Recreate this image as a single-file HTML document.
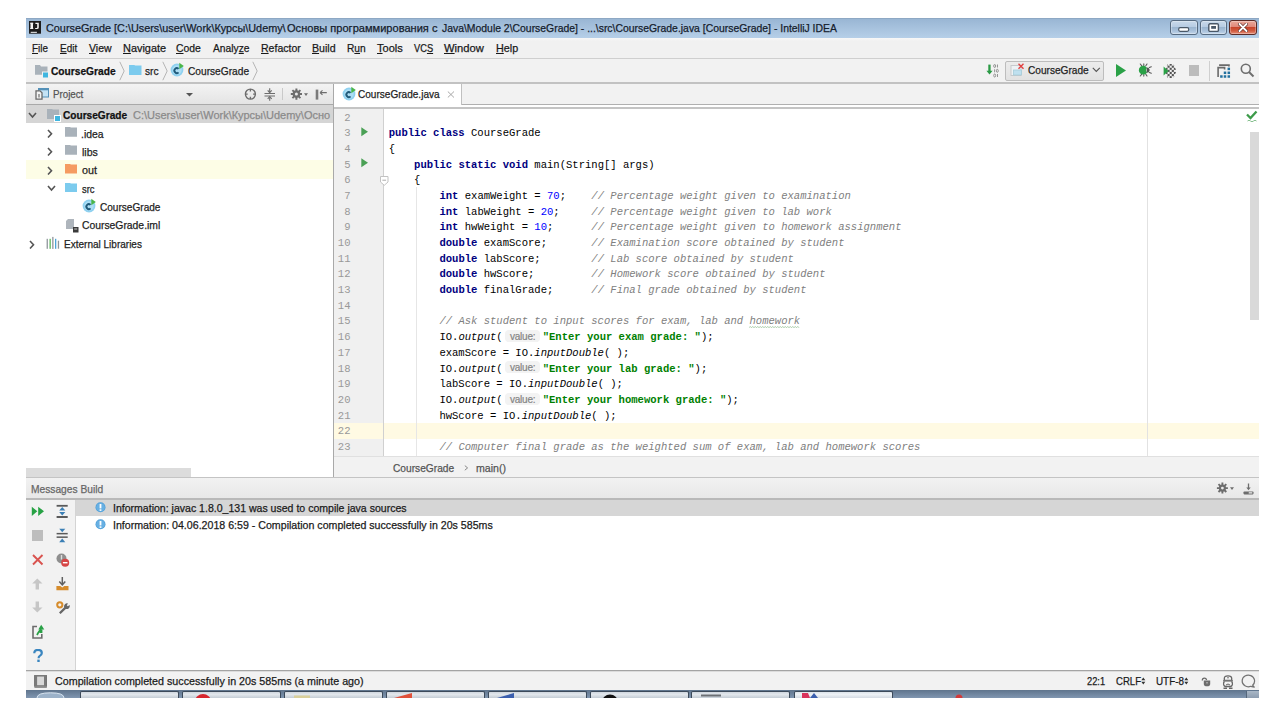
<!DOCTYPE html>
<html><head><meta charset="utf-8">
<style>
*{box-sizing:border-box}
html,body{margin:0;padding:0;width:1280px;height:720px;overflow:hidden;background:#fff;font-family:"Liberation Sans",sans-serif;}
.a{position:absolute}
.ui{font-family:"Liberation Sans",sans-serif;white-space:pre;color:#1a1a1a}
#title{left:26px;top:18px;width:1233px;height:20px;background:linear-gradient(#99b6d4,#b6cfe8);border-top:1px solid #8ea8c4}
#menu{left:26px;top:38px;width:1233px;height:21px;background:linear-gradient(#f8f8f8,#f1f1f1 15%);border-bottom:1px solid #cfcfcf}
#nav{left:26px;top:59px;width:1233px;height:25px;background:#f2f2f2;border-bottom:2px solid #c2c2c2}
#phead{left:26px;top:84px;width:307px;height:21px;background:linear-gradient(#f3f3f3,#e4e4e4);border-bottom:1px solid #a9a9a9}
#tree{left:26px;top:105px;width:307px;height:372px;background:#fff}
#tabs{left:333px;top:84px;width:926px;height:24px;background:#fff}
#tabbar{left:461px;top:84px;width:798px;height:21px;background:#f2f2f2;border-bottom:1px solid #b0b0b0}
#tab{left:333px;top:84px;width:129px;height:21px;background:#fff;border-right:1px solid #c0c0c0}
#tabline{left:333px;top:107px;width:926px;height:2px;background:#c4c4c4;z-index:2}
#editor{left:333px;top:108px;width:926px;height:348px;background:#fff;overflow:hidden}
#gutter{left:0;top:0;width:51px;height:348px;background:#f0f0f0;border-right:1px solid #dcdcdc}
#ecrumb{left:333px;top:456px;width:926px;height:21px;background:#f2f2f2;border-top:1px solid #e0e0e0}
#mhead{left:26px;top:477px;width:1233px;height:23px;background:linear-gradient(#f2f2f2,#e8e8e8);border-top:1px solid #c4c4c4;border-bottom:2px solid #b9b9b9}
#msg{left:26px;top:500px;width:1233px;height:170px;background:#fff}
#mtool{left:26px;top:500px;width:50px;height:170px;background:#f2f2f2;border-right:1px solid #d4d4d4}
#status{left:26px;top:670px;width:1233px;height:20px;background:#f2f2f2;border-top:1px solid #a4a4a4;box-shadow:inset 0 1px 0 #dcdcdc}
#taskbar{left:26px;top:690px;width:1233px;height:8px;background:#7c92ac}
.code{font-family:"Liberation Mono",monospace;font-size:10.55px;line-height:15.69px;white-space:pre;color:#000}
.k{color:#000080;font-weight:bold}
.n{color:#0000ff}
.c{color:#808080;font-style:italic}
.s{color:#008000;font-weight:bold}
.i{font-style:italic}
.ln{height:15.69px}
.h{display:inline-block;position:relative;width:32.7px;margin:0 3.7px 0 3.6px;line-height:10px;top:-0.3px;box-shadow:0 -1px 0 1px #f3f3f3;background:#f3f3f3;border-radius:3px;color:#858585;font-family:"Liberation Sans",sans-serif;font-size:10px;text-align:center;font-style:normal;font-weight:normal;letter-spacing:-0.2px;-webkit-text-stroke:0.2px #858585}
.t{white-space:pre;font-family:"Liberation Sans",sans-serif;transform-origin:0 0;z-index:5}
svg.a{z-index:6}
u{text-decoration:underline;text-underline-offset:1px}
.t{-webkit-text-stroke:0.25px currentColor}

</style></head><body>
<div id="title" class="a"></div>
<div id="menu" class="a"></div>
<div id="nav" class="a"></div>
<div id="phead" class="a"></div>
<div id="tree" class="a"></div>
<div id="tabs" class="a"></div>
<div id="tabbar" class="a"></div>
<div id="tab" class="a"></div>
<div id="tabline" class="a"></div>
<div id="editor" class="a">
  <div id="gutter" class="a"></div>
  <div class="a" style="left:0;top:315px;width:926px;height:15.6px;background:#fffae3"></div>
  <div class="a" style="left:83px;top:79px;width:1px;height:269px;background:#e6e6e6"></div>
  <div class="a" style="left:50px;top:0;width:1px;height:348px;background:#d0d0d0"></div>
  <div class="a" style="left:814px;top:0;width:1px;height:348px;background:#e2e2e2"></div>
  <div class="a" style="left:917px;top:24px;width:9px;height:188px;background:#d9d9d9"></div>
  <div class="a code nums" style="left:0;top:2.5px;width:17.5px;text-align:right;color:#999"><div class="ln">2</div><div class="ln">3</div><div class="ln">4</div><div class="ln">5</div><div class="ln">6</div><div class="ln">7</div><div class="ln">8</div><div class="ln">9</div><div class="ln">10</div><div class="ln">11</div><div class="ln">12</div><div class="ln">13</div><div class="ln">14</div><div class="ln">15</div><div class="ln">16</div><div class="ln">17</div><div class="ln">18</div><div class="ln">19</div><div class="ln">20</div><div class="ln">21</div><div class="ln">22</div><div class="ln">23</div></div>
  <div class="a code" style="left:55.75px;top:2.5px"><div class="ln"></div><div class="ln"><span class="k">public class</span> CourseGrade</div><div class="ln">{</div><div class="ln">    <span class="k">public static void</span> main(String[] args)</div><div class="ln">    {</div><div class="ln">        <span class="k">int</span> examWeight = <span class="n">70</span>;    <span class="c">// Percentage weight given to examination</span></div><div class="ln">        <span class="k">int</span> labWeight = <span class="n">20</span>;     <span class="c">// Percentage weight given to lab work</span></div><div class="ln">        <span class="k">int</span> hwWeight = <span class="n">10</span>;      <span class="c">// Percentage weight given to homework assignment</span></div><div class="ln">        <span class="k">double</span> examScore;       <span class="c">// Examination score obtained by student</span></div><div class="ln">        <span class="k">double</span> labScore;        <span class="c">// Lab score obtained by student</span></div><div class="ln">        <span class="k">double</span> hwScore;         <span class="c">// Homework score obtained by student</span></div><div class="ln">        <span class="k">double</span> finalGrade;      <span class="c">// Final grade obtained by student</span></div><div class="ln"></div><div class="ln">        <span class="c">// Ask student to input scores for exam, lab and homework</span></div><div class="ln">        IO.<span class="i">output</span>(<span class="h">value:</span><span class="s">"Enter your exam grade: "</span>);</div><div class="ln">        examScore = IO.<span class="i">inputDouble</span>( );</div><div class="ln">        IO.<span class="i">output</span>(<span class="h">value:</span><span class="s">"Enter your lab grade: "</span>);</div><div class="ln">        labScore = IO.<span class="i">inputDouble</span>( );</div><div class="ln">        IO.<span class="i">output</span>(<span class="h">value:</span><span class="s">"Enter your homework grade: "</span>);</div><div class="ln">        hwScore = IO.<span class="i">inputDouble</span>( );</div><div class="ln"></div><div class="ln">        <span class="c">// Computer final grade as the weighted sum of exam, lab and homework scores</span></div></div>
</div>
<div id="ecrumb" class="a"></div>
<div id="mhead" class="a"></div>
<div id="msg" class="a"></div>
<div id="mtool" class="a"></div>
<div id="status" class="a"></div>
<div id="taskbar" class="a"></div>
<div class="a t" style="left:46.20px;top:22.90px;font-size:11.5px;line-height:11.5px;letter-spacing:0.000px;color:#15202c;transform:scaleX(0.9424)">CourseGrade [C:\Users\user\Work\Курсы\Udemy\</div>
<div class="a t" style="left:287.20px;top:22.90px;font-size:11.5px;line-height:11.5px;letter-spacing:0.000px;color:#15202c;transform:scaleX(0.9622)">Основы программирования с</div>
<div class="a t" style="left:442.20px;top:22.90px;font-size:11.5px;line-height:11.5px;letter-spacing:0.000px;color:#15202c;transform:scaleX(0.9046)">Java\Module 2\CourseGrade] - ...\src\CourseGrade.java [CourseGrade] - IntelliJ IDEA</div>
<div class="a t" style="left:31.70px;top:43.10px;font-size:11.5px;line-height:11.5px;letter-spacing:0.000px;color:#1a1a1a;transform:scaleX(0.8579)"><u>F</u>ile</div>
<div class="a t" style="left:59.50px;top:43.10px;font-size:11.5px;line-height:11.5px;letter-spacing:0.000px;color:#1a1a1a;transform:scaleX(0.8650)"><u>E</u>dit</div>
<div class="a t" style="left:89.00px;top:43.10px;font-size:11.5px;line-height:11.5px;letter-spacing:0.000px;color:#1a1a1a;transform:scaleX(0.9120)"><u>V</u>iew</div>
<div class="a t" style="left:122.50px;top:43.10px;font-size:11.5px;line-height:11.5px;letter-spacing:0.000px;color:#1a1a1a;transform:scaleX(0.9489)"><u>N</u>avigate</div>
<div class="a t" style="left:176.40px;top:43.10px;font-size:11.5px;line-height:11.5px;letter-spacing:0.000px;color:#1a1a1a;transform:scaleX(0.9037)"><u>C</u>ode</div>
<div class="a t" style="left:213.00px;top:43.10px;font-size:11.5px;line-height:11.5px;letter-spacing:0.000px;color:#1a1a1a;transform:scaleX(0.8927)">Analy<u>z</u>e</div>
<div class="a t" style="left:260.50px;top:43.10px;font-size:11.5px;line-height:11.5px;letter-spacing:0.000px;color:#1a1a1a;transform:scaleX(0.9159)"><u>R</u>efactor</div>
<div class="a t" style="left:312.40px;top:43.10px;font-size:11.5px;line-height:11.5px;letter-spacing:0.000px;color:#1a1a1a;transform:scaleX(0.9231)"><u>B</u>uild</div>
<div class="a t" style="left:347.40px;top:43.10px;font-size:11.5px;line-height:11.5px;letter-spacing:0.000px;color:#1a1a1a;transform:scaleX(0.8857)">R<u>u</u>n</div>
<div class="a t" style="left:377.00px;top:43.10px;font-size:11.5px;line-height:11.5px;letter-spacing:0.000px;color:#1a1a1a;transform:scaleX(0.9630)"><u>T</u>ools</div>
<div class="a t" style="left:414.00px;top:43.10px;font-size:11.5px;line-height:11.5px;letter-spacing:0.000px;color:#1a1a1a;transform:scaleX(0.8083)">VC<u>S</u></div>
<div class="a t" style="left:443.70px;top:43.10px;font-size:11.5px;line-height:11.5px;letter-spacing:0.000px;color:#1a1a1a;transform:scaleX(0.9756)"><u>W</u>indow</div>
<div class="a t" style="left:495.50px;top:43.10px;font-size:11.5px;line-height:11.5px;letter-spacing:0.000px;color:#1a1a1a;transform:scaleX(0.9375)"><u>H</u>elp</div>
<div class="a t" style="left:51.30px;top:65.90px;font-size:11.5px;line-height:11.5px;letter-spacing:0.000px;color:#111;transform:scaleX(0.8863);font-weight:bold">CourseGrade</div>
<div class="a t" style="left:145.00px;top:65.90px;font-size:11.5px;line-height:11.5px;letter-spacing:0.000px;color:#222;transform:scaleX(0.8867)">src</div>
<div class="a t" style="left:188.30px;top:65.90px;font-size:11.5px;line-height:11.5px;letter-spacing:0.000px;color:#222;transform:scaleX(0.8841)">CourseGrade</div>
<div class="a t" style="left:1027.60px;top:65.40px;font-size:11.5px;line-height:11.5px;letter-spacing:0.000px;color:#222;transform:scaleX(0.8797)">CourseGrade</div>
<div class="a t" style="left:52.80px;top:89.20px;font-size:11.5px;line-height:11.5px;letter-spacing:0.000px;color:#555;transform:scaleX(0.8472)">Project</div>
<div class="a t" style="left:358.40px;top:89.40px;font-size:11.5px;line-height:11.5px;letter-spacing:0.000px;color:#222;transform:scaleX(0.8745)">CourseGrade.java</div>
<div class="a t" style="left:63.25px;top:110.20px;font-size:11.5px;line-height:11.5px;letter-spacing:0.000px;color:#111;transform:scaleX(0.8801);font-weight:bold">CourseGrade</div>
<div class="a t" style="left:132.90px;top:110.20px;font-size:11.5px;line-height:11.5px;letter-spacing:0.000px;color:#8a8a8a;transform:scaleX(0.9556);width:207.31px;overflow:hidden">C:\Users\user\Work\Курсы\Udemy\Осно</div>
<div class="a t" style="left:80.70px;top:128.57px;font-size:11.5px;line-height:11.5px;letter-spacing:0.000px;color:#222;transform:scaleX(0.9021)">.idea</div>
<div class="a t" style="left:81.60px;top:146.94px;font-size:11.5px;line-height:11.5px;letter-spacing:0.000px;color:#222;transform:scaleX(0.9206)">libs</div>
<div class="a t" style="left:81.70px;top:165.31px;font-size:11.5px;line-height:11.5px;letter-spacing:0.000px;color:#222;transform:scaleX(0.9375)">out</div>
<div class="a t" style="left:81.70px;top:183.68px;font-size:11.5px;line-height:11.5px;letter-spacing:0.000px;color:#222;transform:scaleX(0.8200)">src</div>
<div class="a t" style="left:100.00px;top:202.05px;font-size:11.5px;line-height:11.5px;letter-spacing:0.000px;color:#222;transform:scaleX(0.8754)">CourseGrade</div>
<div class="a t" style="left:81.70px;top:220.42px;font-size:11.5px;line-height:11.5px;letter-spacing:0.000px;color:#222;transform:scaleX(0.9000)">CourseGrade.iml</div>
<div class="a t" style="left:63.60px;top:238.79px;font-size:11.5px;line-height:11.5px;letter-spacing:0.000px;color:#222;transform:scaleX(0.8711)">External Libraries</div>
<div class="a t" style="left:392.90px;top:462.75px;font-size:11.5px;line-height:11.5px;letter-spacing:0.000px;color:#555;transform:scaleX(0.8855)">CourseGrade</div>
<div class="a t" style="left:475.90px;top:462.75px;font-size:11.5px;line-height:11.5px;letter-spacing:0.000px;color:#555;transform:scaleX(0.9212)">main()</div>
<div class="a t" style="left:30.50px;top:484.00px;font-size:11.5px;line-height:11.5px;letter-spacing:0.000px;color:#666;transform:scaleX(0.8889)">Messages Build</div>
<div class="a t" style="left:112.70px;top:503.00px;font-size:11.5px;line-height:11.5px;letter-spacing:0.000px;color:#1a1a1a;transform:scaleX(0.9166)">Information: javac 1.8.0_131 was used to compile java sources</div>
<div class="a t" style="left:112.70px;top:519.50px;font-size:11.5px;line-height:11.5px;letter-spacing:0.000px;color:#1a1a1a;transform:scaleX(0.9238)">Information: 04.06.2018 6:59 - Compilation completed successfully in 20s 585ms</div>
<div class="a t" style="left:54.50px;top:675.60px;font-size:11.5px;line-height:11.5px;letter-spacing:0.000px;color:#1a1a1a;transform:scaleX(0.9320)">Compilation completed successfully in 20s 585ms (a minute ago)</div>
<div class="a t" style="left:1086.75px;top:675.80px;font-size:11.5px;line-height:11.5px;letter-spacing:0.000px;color:#1a1a1a;transform:scaleX(0.8068)">22:1</div>
<div class="a t" style="left:1116.00px;top:675.80px;font-size:11.5px;line-height:11.5px;letter-spacing:0.000px;color:#1a1a1a;transform:scaleX(0.8333)">CRLF</div>
<div class="a t" style="left:1155.70px;top:675.80px;font-size:11.5px;line-height:11.5px;letter-spacing:0.000px;color:#1a1a1a;transform:scaleX(0.8576)">UTF-8</div>
<div class="a" style="left:26px;top:104.5px;width:307px;height:18.2px;background:#d5d5d5"></div>
<div class="a" style="left:26px;top:160px;width:307px;height:18.6px;background:#fdfde6"></div>
<svg class="a" style="left:28px;top:111.5px;" width="9" height="7" viewBox="0 0 9 7"><path d="M1 1L4.5 5L8 1" fill="none" stroke="#555" stroke-width="1.6"/></svg>
<svg class="a" style="left:47px;top:108.7px;" width="12" height="10" viewBox="0 0 12 10"><path d="M0 0H5.0L6.01.5H12V10H0Z" fill="#a9b2ba"/></svg>
<svg class="a" style="left:54px;top:114.7px;" width="7" height="7" viewBox="0 0 7 7"><rect x="0.5" y="0.5" width="6" height="6" fill="#40b6e0" stroke="#fff" stroke-width="1"/></svg>
<svg class="a" style="left:47px;top:128.5px;" width="6.5" height="9.5" viewBox="0 0 6.5 9.5"><path d="M1 1L4.5 4.75L1 8.5" fill="none" stroke="#555" stroke-width="1.6"/></svg>
<svg class="a" style="left:65px;top:127px;" width="12" height="9.8" viewBox="0 0 12 9.8"><path d="M0 0H5.0L6.01.5H12V9.8H0Z" fill="#a9b2ba"/></svg>
<svg class="a" style="left:47px;top:147px;" width="6.5" height="9.5" viewBox="0 0 6.5 9.5"><path d="M1 1L4.5 4.75L1 8.5" fill="none" stroke="#555" stroke-width="1.6"/></svg>
<svg class="a" style="left:65px;top:145.4px;" width="12" height="9.8" viewBox="0 0 12 9.8"><path d="M0 0H5.0L6.01.5H12V9.8H0Z" fill="#a9b2ba"/></svg>
<svg class="a" style="left:47px;top:165.5px;" width="6.5" height="9.5" viewBox="0 0 6.5 9.5"><path d="M1 1L4.5 4.75L1 8.5" fill="none" stroke="#555" stroke-width="1.6"/></svg>
<svg class="a" style="left:65px;top:164.2px;" width="12" height="9.5" viewBox="0 0 12 9.5"><path d="M0 0H5.0L6.01.5H12V9.5H0Z" fill="#f59b61"/></svg>
<svg class="a" style="left:46.5px;top:185px;" width="9" height="7" viewBox="0 0 9 7"><path d="M1 1L4.5 5L8 1" fill="none" stroke="#555" stroke-width="1.6"/></svg>
<svg class="a" style="left:65px;top:182.8px;" width="12" height="9.5" viewBox="0 0 12 9.5"><path d="M0 0H5.0L6.01.5H12V9.5H0Z" fill="#7ccbee"/></svg>
<svg class="a" style="left:81.2px;top:198.3px;" width="16" height="16" viewBox="0 0 16 16"><circle cx="8" cy="8" r="6.4" fill="#8fd1f0"/><circle cx="8" cy="8" r="4.7" fill="#acdef5"/><path d="M9.5 6.9A2.4 2.4 0 1 0 9.5 10.3" fill="none" stroke="#1f5a7a" stroke-width="1.9"/><path d="M10.3 0.8L14.8 4L10.3 7.2Z" fill="#4ab54a"/></svg>
<svg class="a" style="left:66px;top:218.5px;" width="13" height="14" viewBox="0 0 13 14"><path d="M0 2L2 0H8V10H0Z" fill="#aeb5bc"/><rect x="7" y="8" width="5.5" height="5.5" fill="#3a3a3a"/><rect x="8.2" y="9.5" width="3" height="1" fill="#ccc"/></svg>
<svg class="a" style="left:29px;top:239.5px;" width="6.5" height="9.5" viewBox="0 0 6.5 9.5"><path d="M1 1L4.5 4.75L1 8.5" fill="none" stroke="#555" stroke-width="1.6"/></svg>
<svg class="a" style="left:46px;top:236px;" width="14" height="13" viewBox="0 0 14 13"><rect x="0.6" y="2.8" width="1.3" height="10" fill="#8f969c"/><rect x="3.5" y="2.8" width="1.3" height="10" fill="#5cb85c"/><rect x="6.2" y="0.9" width="1.3" height="12" fill="#8f969c"/><rect x="9" y="2.8" width="1.3" height="10" fill="#4da3d6"/><rect x="11.8" y="4.7" width="1.3" height="8" fill="#8f969c"/></svg>
<div class="a" style="left:26px;top:468px;width:165px;height:9px;background:#dcdcdc"></div>
<svg class="a" style="left:35px;top:65px;" width="14" height="14" viewBox="0 0 14 14"><path d="M0 0H5L6 1.5H12.5V9.8H0Z" fill="#a9b2ba"/><rect x="7.5" y="7" width="6" height="6" fill="#40b6e0" stroke="#f2f2f2" stroke-width="1"/></svg>
<svg class="a" style="left:119px;top:61px;" width="7" height="20" viewBox="0 0 7 20"><path d="M0.8 0.8L5.2 10L0.8 19.2" fill="none" stroke="#b5b5b5" stroke-width="1"/></svg>
<svg class="a" style="left:129px;top:65px;" width="12.5" height="10" viewBox="0 0 12.5 10"><path d="M0 0H5.2L6.21.5H12.5V10H0Z" fill="#7ccbee"/></svg>
<svg class="a" style="left:161.5px;top:61px;" width="7" height="20" viewBox="0 0 7 20"><path d="M0.8 0.8L5.2 10L0.8 19.2" fill="none" stroke="#b5b5b5" stroke-width="1"/></svg>
<svg class="a" style="left:169.4px;top:62.3px;" width="16" height="16" viewBox="0 0 16 16"><circle cx="8" cy="8" r="6.4" fill="#8fd1f0"/><circle cx="8" cy="8" r="4.7" fill="#acdef5"/><path d="M9.5 6.9A2.4 2.4 0 1 0 9.5 10.3" fill="none" stroke="#1f5a7a" stroke-width="1.9"/><path d="M10.3 0.8L14.8 4L10.3 7.2Z" fill="#4ab54a"/></svg>
<svg class="a" style="left:252px;top:61px;" width="7" height="20" viewBox="0 0 7 20"><path d="M0.8 0.8L5.2 10L0.8 19.2" fill="none" stroke="#b5b5b5" stroke-width="1"/></svg>
<svg class="a" style="left:340.5px;top:85.5px;" width="16" height="16" viewBox="0 0 16 16"><circle cx="8" cy="8" r="6.4" fill="#8fd1f0"/><circle cx="8" cy="8" r="4.7" fill="#acdef5"/><path d="M9.5 6.9A2.4 2.4 0 1 0 9.5 10.3" fill="none" stroke="#1f5a7a" stroke-width="1.9"/><path d="M10.3 0.8L14.8 4L10.3 7.2Z" fill="#4ab54a"/></svg>
<svg class="a" style="left:447px;top:91px;" width="8" height="7" viewBox="0 0 8 7"><path d="M0.8 0.5L7 6.5M7 0.5L0.8 6.5" stroke="#a8a8a8" stroke-width="1"/></svg>
<svg class="a" style="left:28.9px;top:20.9px;" width="12.2" height="12.7" viewBox="0 0 12.2 12.7"><rect width="12.2" height="12.7" fill="#1d1d1d"/><rect x="1.5" y="1.8" width="2.5" height="6.2" fill="#f2f2f2"/><rect x="1.2" y="1.8" width="3.1" height="0.9" fill="#f2f2f2"/><rect x="1.2" y="7.1" width="3.1" height="0.9" fill="#f2f2f2"/><path d="M6.4 1.8H9.8V6.5Q9.8 8.1 8 8.1H6.2V6.9H7.6Q8.2 6.9 8.2 6.3V3H6.4Z" fill="#f2f2f2"/><rect x="1.7" y="10.8" width="6.2" height="1.1" fill="#e8e8e8"/></svg>
<div class="a" style="left:1169.5px;top:20px;width:28.2px;height:15.3px;background:linear-gradient(#c9d9ea 0%,#b7cce3 45%,#9bb5d0 50%,#a9c1db 75%,#c2d5e9 100%);border:1px solid #566a80;border-radius:3px;box-shadow:inset 0 0 0 1px rgba(255,255,255,0.3)"></div>
<div class="a" style="left:1199.5px;top:20px;width:27.5px;height:15.3px;background:linear-gradient(#c9d9ea 0%,#b7cce3 45%,#9bb5d0 50%,#a9c1db 75%,#c2d5e9 100%);border:1px solid #566a80;border-radius:3px;box-shadow:inset 0 0 0 1px rgba(255,255,255,0.3)"></div>
<div class="a" style="left:1229.2px;top:20px;width:27.5px;height:15.3px;background:linear-gradient(#eaa99b 0%,#e0887a 45%,#c8452c 50%,#d05a3f 75%,#e6907a 100%);border:1px solid #5b2a25;border-radius:3px;box-shadow:inset 0 0 0 1px rgba(255,255,255,0.3)"></div>
<svg class="a" style="left:1178px;top:27px;" width="12" height="5" viewBox="0 0 12 5"><rect x="0.7" y="0.7" width="10" height="3.6" rx="1.5" fill="#fff" stroke="#4a5868" stroke-width="1.2"/></svg>
<svg class="a" style="left:1207.5px;top:23px;" width="12" height="9" viewBox="0 0 12 9"><rect x="0.8" y="0.8" width="9.6" height="7.6" rx="1.2" fill="#fff" stroke="#4a5868" stroke-width="1.4"/><rect x="3.2" y="3" width="4.8" height="2.8" fill="#4a5868"/></svg>
<svg class="a" style="left:1238px;top:23px;" width="10" height="9" viewBox="0 0 10 9"><path d="M1.5 1L8.5 8M8.5 1L1.5 8" stroke="#5b2a25" stroke-width="3.2" stroke-linecap="round"/><path d="M1.5 1L8.5 8M8.5 1L1.5 8" stroke="#fff" stroke-width="1.9" stroke-linecap="round"/></svg>
<svg class="a" style="left:985.5px;top:63.5px;" width="14" height="14" viewBox="0 0 14 14"><rect x="2.3" y="0.6" width="2.3" height="7" fill="#2a9a45"/><path d="M0.4 6.8H6.6L3.5 10.6Z" fill="#2a9a45"/><g fill="none" stroke="#8a8a8a" stroke-width="0.9"><ellipse cx="8.7" cy="2" rx="1" ry="1.5"/><path d="M11.5 0.5V3.5"/><path d="M8.6 5.3V8.3"/><ellipse cx="11.3" cy="6.8" rx="1" ry="1.5"/><ellipse cx="8.7" cy="11.5" rx="1" ry="1.5"/><path d="M11.5 10V13"/></g></svg>
<div class="a" style="left:1005.2px;top:60.8px;width:98.8px;height:20px;background:linear-gradient(#ececec,#e2e2e2);border:1px solid #bdbdbd;border-radius:2px"></div>
<svg class="a" style="left:1009.5px;top:62.5px;" width="15" height="14" viewBox="0 0 15 14"><rect x="1" y="2.5" width="10" height="10" fill="#eef2f5" stroke="#c7c9cc" stroke-width="1"/><rect x="3.5" y="7" width="8" height="5" fill="#bfe0ef" stroke="#a6ccd9" stroke-width="0.8"/><path d="M8.5 0.8L13.5 5.8M13.5 0.8L8.5 5.8" stroke="#e04040" stroke-width="1.4"/></svg>
<svg class="a" style="left:1091.5px;top:67px;" width="9" height="6" viewBox="0 0 9 6"><path d="M0.8 0.8L4.3 4.5L7.8 0.8" fill="none" stroke="#555" stroke-width="1.1"/></svg>
<svg class="a" style="left:1116px;top:64px;" width="10" height="13" viewBox="0 0 10 13"><path d="M0 0L10 6.5L0 13Z" fill="#2aa147"/></svg>
<svg class="a" style="left:1138px;top:63px;" width="15" height="14" viewBox="0 0 15 14"><g stroke="#5a5a5a" stroke-width="1.1" stroke-linecap="round"><path d="M2.3 1L3.8 2.8M5.8 0.9V2.5M9 1L7.8 2.8M2.3 13L3.8 11.2M5.8 13.1V11.5M9 13L7.8 11.2M11.3 4.5L13.3 3.8M11.3 9.5L13.3 10.2"/></g><path d="M9.02 5.02A4.4 4.4 0 1 0 9.02 9.38A3.3 3.3 0 0 1 9.02 5.02Z" fill="#2aa147"/><path d="M8.7 4.6C12.6 4.6 12.6 9.8 8.7 9.8Z" fill="#555"/></svg>
<svg class="a" style="left:1165px;top:63.5px;" width="12" height="14" viewBox="0 0 12 14"><defs><clipPath id="cvc"><path d="M2.5 0H8.5L11.5 7L8.5 14H2.5L0.2 7Z"/></clipPath></defs><g clip-path="url(#cvc)" fill="#555"><rect x="0.45" y="-0.45" width="2.1" height="2.1"/><rect x="0.45" y="3.75" width="2.1" height="2.1"/><rect x="0.45" y="7.95" width="2.1" height="2.1"/><rect x="0.45" y="12.15" width="2.1" height="2.1"/><rect x="2.55" y="1.65" width="2.1" height="2.1"/><rect x="2.55" y="5.85" width="2.1" height="2.1"/><rect x="2.55" y="10.05" width="2.1" height="2.1"/><rect x="4.65" y="-0.45" width="2.1" height="2.1"/><rect x="4.65" y="3.75" width="2.1" height="2.1"/><rect x="4.65" y="7.95" width="2.1" height="2.1"/><rect x="4.65" y="12.15" width="2.1" height="2.1"/><rect x="6.75" y="1.65" width="2.1" height="2.1"/><rect x="6.75" y="5.85" width="2.1" height="2.1"/><rect x="6.75" y="10.05" width="2.1" height="2.1"/><rect x="8.85" y="-0.45" width="2.1" height="2.1"/><rect x="8.85" y="3.75" width="2.1" height="2.1"/><rect x="8.85" y="7.95" width="2.1" height="2.1"/><rect x="8.85" y="12.15" width="2.1" height="2.1"/></g></svg>
<svg class="a" style="left:1162.5px;top:65.5px;" width="7" height="10" viewBox="0 0 7 10"><path d="M0.6 0.5L5.5 5L0.6 9.5Z" fill="#2aa147"/></svg>
<div class="a" style="left:1188.8px;top:65px;width:10.4px;height:11px;background:#bcbcbc"></div>
<div class="a" style="left:1209px;top:61px;width:1px;height:20px;background:#cfcfcf"></div>
<svg class="a" style="left:1217px;top:64px;" width="15" height="15" viewBox="0 0 15 15"><path d="M2.1 1.1H11.9V2.6" fill="none" stroke="#6a6a6a" stroke-width="1.8"/><path d="M1.1 12.9V3.6H7.6V5.4" fill="none" stroke="#6a6a6a" stroke-width="1.6"/><g fill="#23719f"><rect x="10.55" y="3.65" width="2.5" height="2.5"/><rect x="6.75" y="7.55" width="2.5" height="2.5"/><rect x="10.55" y="7.55" width="2.5" height="2.5"/><rect x="3.15" y="11.25" width="2.5" height="2.5"/><rect x="6.75" y="11.25" width="2.5" height="2.5"/><rect x="10.55" y="11.25" width="2.5" height="2.5"/></g></svg>
<svg class="a" style="left:1240px;top:62.5px;" width="15" height="15" viewBox="0 0 15 15"><circle cx="5.8" cy="5.8" r="4.5" fill="none" stroke="#6e6e6e" stroke-width="1.6"/><path d="M9 9L13.5 13.5" stroke="#6e6e6e" stroke-width="2"/></svg>
<svg class="a" style="left:34.5px;top:87.5px;" width="14" height="12" viewBox="0 0 14 12"><rect x="3.5" y="0.5" width="10" height="8.5" fill="#c4e3f5" stroke="#5591b8" stroke-width="1"/><rect x="3.5" y="0.5" width="10" height="1.8" fill="#5591b8"/><path d="M1 2.8H5L7 4.8V11.2H1Z" fill="#f3f3f3" stroke="#6a6a6a" stroke-width="1.3"/><rect x="3.5" y="6" width="1" height="3.5" fill="#555"/></svg>
<svg class="a" style="left:185.5px;top:92.5px;" width="7" height="4" viewBox="0 0 7 4"><path d="M0 0H7L3.5 3.5Z" fill="#555"/></svg>
<svg class="a" style="left:243.5px;top:87.5px;" width="13" height="13" viewBox="0 0 13 13"><circle cx="6.4" cy="6.1" r="5" fill="none" stroke="#6d6d6d" stroke-width="1.4"/><g stroke="#6d6d6d" stroke-width="1.4"><path d="M6.4 1.1V3.4M6.4 8.8V11.1M1.4 6.1H3.7M9.1 6.1H11.4"/></g></svg>
<svg class="a" style="left:263.5px;top:87.5px;" width="12" height="13" viewBox="0 0 12 13"><g stroke="#6d6d6d" stroke-width="1.1"><path d="M0.5 5.5H11M0.5 8H11M5.7 0.3V4M5.7 9.5V12.8"/></g><path d="M3.7 2.3L5.7 4.6L7.7 2.3M3.7 10.9L5.7 8.6L7.7 10.9" fill="none" stroke="#6d6d6d" stroke-width="1.1"/></svg>
<div class="a" style="left:282px;top:88px;width:1px;height:12px;background:#c9c9c9"></div>
<svg class="a" style="left:289.5px;top:87.5px;" width="19" height="13" viewBox="0 0 19 13"><g fill="#6d6d6d"><circle cx="6.4" cy="6.1" r="3.8"/><g stroke="#6d6d6d" stroke-width="2"><path d="M6.4 0.5V11.7M0.8 6.1H12M2.4 2.1L10.4 10.1M10.4 2.1L2.4 10.1"/></g></g><circle cx="6.4" cy="6.1" r="1.5" fill="#e9e9e9"/><path d="M14 5.3H18L16 7.9Z" fill="#6d6d6d"/></svg>
<svg class="a" style="left:315px;top:88.5px;" width="13" height="12" viewBox="0 0 13 12"><rect x="0.7" y="0.6" width="2.6" height="10" fill="#7a7a7a"/><path d="M5 3.6H11.8M5 3.6L7.5 1.3M5 3.6L7.5 5.9" fill="none" stroke="#6d6d6d" stroke-width="1.1"/></svg>
<svg class="a" style="left:360.5px;top:126.5px;" width="8" height="10" viewBox="0 0 8 10"><path d="M0.3 0.3L7 4.7L0.3 9.2Z" fill="#4aa055"/></svg>
<svg class="a" style="left:360.5px;top:157.9px;" width="8" height="10" viewBox="0 0 8 10"><path d="M0.3 0.3L7 4.7L0.3 9.2Z" fill="#4aa055"/></svg>
<svg class="a" style="left:379.6px;top:175.6px;" width="9" height="10" viewBox="0 0 9 10"><path d="M0.5 0.5H8V6L4.25 9.3L0.5 6Z" fill="#fff" stroke="#c2c2c2" stroke-width="1"/><path d="M2.4 4.2H6.1" stroke="#aaa" stroke-width="1"/></svg>
<svg class="a" style="left:1246px;top:110px;" width="12" height="13" viewBox="0 0 12 13"><path d="M1 4.5L4.5 8L10.5 1.5" fill="none" stroke="#3d9b4a" stroke-width="2.3"/><path d="M1.5 11Q3 9.5 4.5 11T7.5 11T10.5 11" fill="none" stroke="#79b982" stroke-width="0.9"/></svg>
<svg class="a" style="left:463.5px;top:465px;" width="5" height="6" viewBox="0 0 5 6"><path d="M0.8 0.6L3.6 2.9L0.8 5.2" fill="none" stroke="#888" stroke-width="1"/></svg>
<svg class="a" style="left:1215.5px;top:482.3px;" width="19" height="13" viewBox="0 0 19 13"><g fill="#6d6d6d"><circle cx="6.4" cy="6.1" r="3.6"/><g stroke="#6d6d6d" stroke-width="1.9"><path d="M6.4 0.6V11.6M0.9 6.1H11.9M2.5 2.2L10.3 10M10.3 2.2L2.5 10"/></g></g><circle cx="6.4" cy="6.1" r="1.4" fill="#ececec"/><path d="M14 5.3H18L16 7.9Z" fill="#6d6d6d"/></svg>
<svg class="a" style="left:1242.5px;top:482.5px;" width="12" height="12" viewBox="0 0 12 12"><path d="M5.5 0.5V5" stroke="#6d6d6d" stroke-width="1.3"/><path d="M3.3 4.4H7.7L5.5 7.2Z" fill="#6d6d6d"/><rect x="0.5" y="8.4" width="10" height="3" rx="0.8" fill="#6d6d6d"/><rect x="5.6" y="9.3" width="3.8" height="1.2" rx="0.6" fill="#eee"/></svg>
<div class="a" style="left:76px;top:500px;width:1183px;height:16px;background:#d6d6d6"></div>
<svg class="a" style="left:95.3px;top:502.4px;" width="11" height="11" viewBox="0 0 11 11"><circle cx="5.5" cy="5.3" r="5" fill="#4f9fd8"/><circle cx="5.5" cy="5.3" r="4.3" fill="#68b0e3"/><rect x="4.6" y="2" width="1.8" height="4.4" fill="#fff"/><rect x="4.6" y="7.3" width="1.8" height="1.6" fill="#fff"/></svg>
<svg class="a" style="left:95.3px;top:518.7px;" width="11" height="11" viewBox="0 0 11 11"><circle cx="5.5" cy="5.3" r="5" fill="#4f9fd8"/><circle cx="5.5" cy="5.3" r="4.3" fill="#68b0e3"/><rect x="4.6" y="2" width="1.8" height="4.4" fill="#fff"/><rect x="4.6" y="7.3" width="1.8" height="1.6" fill="#fff"/></svg>
<svg class="a" style="left:31px;top:506px;" width="14" height="11" viewBox="0 0 14 11"><path d="M0.8 0.7L6.3 5.35L0.8 10ZM7.2 0.7L13 5.35L7.2 10Z" fill="#27a244"/></svg>
<svg class="a" style="left:56px;top:504px;" width="12" height="15" viewBox="0 0 12 15"><g fill="#3b7fb5"><path d="M3.2 6.5H9.3L6.25 3Z"/><path d="M3.2 7.9H9.3L6.25 11.4Z"/></g><rect x="0.6" y="0.9" width="11.1" height="1.8" fill="#5a5a5a"/><rect x="0.6" y="12" width="11.1" height="2" fill="#5a5a5a"/></svg>
<div class="a" style="left:32px;top:530px;width:11px;height:10.5px;background:#bdbdbd"></div>
<svg class="a" style="left:56px;top:528px;" width="12" height="15" viewBox="0 0 12 15"><g fill="#3b7fb5"><path d="M3.2 0.8H9.3L6.25 4.3Z"/><path d="M3.2 14.3H9.3L6.25 10.5Z"/></g><rect x="0.6" y="4.9" width="11.1" height="1.5" fill="#5a5a5a"/><rect x="0.6" y="8.4" width="11.1" height="1.5" fill="#5a5a5a"/></svg>
<svg class="a" style="left:32px;top:553.5px;" width="12" height="12" viewBox="0 0 12 12"><path d="M1 1L10.5 10.5M10.5 1L1 10.5" stroke="#d9534f" stroke-width="1.9"/></svg>
<svg class="a" style="left:55.5px;top:552.5px;" width="14" height="14" viewBox="0 0 14 14"><circle cx="5.5" cy="5.5" r="5" fill="#8e8e8e"/><rect x="4.8" y="2" width="1.4" height="4.5" fill="#ddd"/><circle cx="9.2" cy="9.7" r="4" fill="#d64545"/><rect x="6.9" y="9" width="4.6" height="1.4" fill="#fff"/></svg>
<svg class="a" style="left:32px;top:577.5px;" width="11" height="12" viewBox="0 0 11 12"><path d="M5.3 0.5L10.5 5.5H7V11.5H3.6V5.5H0.2Z" fill="#c6c6c6"/></svg>
<svg class="a" style="left:55.5px;top:576.5px;" width="14" height="14" viewBox="0 0 14 14"><path d="M6.3 0V7" stroke="#606060" stroke-width="1.5"/><path d="M3.3 4.5L6.3 7.8L9.3 4.5" fill="none" stroke="#606060" stroke-width="1.5"/><path d="M0.4 9.1H4.3L6.3 10.6L8.3 9.1H12.5V13.3H0.4Z" fill="#d68c2c"/></svg>
<svg class="a" style="left:32px;top:601px;" width="11" height="12" viewBox="0 0 11 12"><path d="M5.3 11.5L10.5 6.5H7V0.5H3.6V6.5H0.2Z" fill="#c6c6c6"/></svg>
<svg class="a" style="left:55.5px;top:601px;" width="14" height="15" viewBox="0 0 14 15"><circle cx="3.8" cy="3.8" r="2.6" fill="none" stroke="#d68c2c" stroke-width="2"/><path d="M12 2.5A3 3 0 0 0 8.2 6.3L3 11.5L4.6 13.1L9.8 7.9A3 3 0 0 0 13.6 4.1L11.8 5.2L10.8 4.2Z" fill="#666"/></svg>
<svg class="a" style="left:32px;top:624px;" width="14" height="15" viewBox="0 0 14 15"><path d="M5 2.5H1V14H9.8V10" fill="none" stroke="#6d6d6d" stroke-width="1.6"/><path d="M5 11Q6.5 8 8.5 5.5V8H9.5V5.5" fill="none" stroke="#2aa147" stroke-width="1.8"/><path d="M6.3 5.5L9.2 0.8L12.3 5.5Z" fill="#2aa147"/></svg>
<svg class="a" style="left:33px;top:649px;" width="11" height="14" viewBox="0 0 11 14"><path d="M1.3 4.3Q1.3 0.9 5 0.9Q8.8 0.9 8.8 4Q8.8 5.8 6.8 6.9Q5.6 7.6 5.6 9.2" fill="none" stroke="#3a86c0" stroke-width="2.2"/><rect x="4.3" y="10.6" width="2.4" height="2.4" fill="#3a86c0"/></svg>
<svg class="a" style="left:34px;top:675px;" width="14" height="13" viewBox="0 0 14 13"><rect x="0.8" y="0.8" width="11.5" height="10.2" fill="#d8d8d8" stroke="#6d6d6d" stroke-width="1.4"/><rect x="0.5" y="0.5" width="2.6" height="10.8" fill="#7a7a7a"/><rect x="10" y="0.5" width="2.6" height="10.8" fill="#7a7a7a"/><rect x="0.4" y="11.7" width="12.4" height="1.1" fill="#7a7a7a"/></svg>
<svg class="a" style="left:1141px;top:677px;" width="5" height="8" viewBox="0 0 5 8"><path d="M0.3 3.2L2.3 0.6L4.3 3.2ZM0.3 4.8L2.3 7.4L4.3 4.8Z" fill="#333"/></svg>
<svg class="a" style="left:1184.3px;top:677px;" width="5" height="8" viewBox="0 0 5 8"><path d="M0.3 3.2L2.3 0.6L4.3 3.2ZM0.3 4.8L2.3 7.4L4.3 4.8Z" fill="#333"/></svg>
<svg class="a" style="left:1201px;top:676.5px;" width="11" height="10" viewBox="0 0 11 10"><path d="M1.3 3.6Q1.3 1.2 3.4 1.2Q5.2 1.2 5.6 3" fill="none" stroke="#666" stroke-width="1.3"/><path d="M2.8 3.5H9.2V7Q9.2 9.3 6 9.3Q2.8 9.3 2.8 7Z" fill="#6d6d6d"/><path d="M5.2 5H6.8L6 7.6Z" fill="#bbb"/></svg>
<svg class="a" style="left:1222px;top:674.5px;" width="12" height="14" viewBox="0 0 12 14"><path d="M2.3 5.5V3.5Q2.3 0.8 6 0.8Q9.7 0.8 9.7 3.5V5.5Z" fill="#f4f4f4" stroke="#666" stroke-width="1.3"/><circle cx="6" cy="2.8" r="0.8" fill="#666"/><rect x="1" y="5.2" width="10" height="1.3" fill="#777"/><path d="M2.5 6.5Q1.2 7.5 1.6 9.5Q2 11.2 3.5 11.5H8.5Q10 11.2 10.4 9.5Q10.8 7.5 9.5 6.5" fill="none" stroke="#666" stroke-width="1.3"/><path d="M4 10Q6 8 8 10" fill="none" stroke="#666" stroke-width="1"/><path d="M1.5 13.2H5M7 13.2H10.5" stroke="#666" stroke-width="1.4"/></svg>
<svg class="a" style="left:1240px;top:674px;" width="16" height="15" viewBox="0 0 16 15"><path d="M12.6 11.2A6.2 5.8 0 1 0 10.8 12.3L14.3 13.2Z" fill="none" stroke="#737373" stroke-width="1.2" stroke-linejoin="round"/></svg>
<div class="a" style="left:26px;top:690px;width:1233px;height:8px;background:linear-gradient(#5f748c,#8096b0)"></div>
<svg class="a" style="left:36px;top:692px;" width="30" height="6" viewBox="0 0 30 6"><path d="M1 6Q1 0.8 14.5 0.8Q28 0.8 28 6" fill="#9cb2c9" stroke="#d8e4ef" stroke-width="1"/></svg>
<div class="a" style="left:80px;top:691px;width:99px;height:7px;background:linear-gradient(#cfd6de,#e2e7ec 40%,#c4ccd5);border:1px solid #3c4a5a;border-bottom:none;border-radius:2px 2px 0 0"></div>
<div class="a" style="left:182px;top:691px;width:99px;height:7px;background:linear-gradient(#cfd6de,#e2e7ec 40%,#c4ccd5);border:1px solid #3c4a5a;border-bottom:none;border-radius:2px 2px 0 0"></div>
<div class="a" style="left:283.8px;top:691px;width:99px;height:7px;background:linear-gradient(#cfd6de,#e2e7ec 40%,#c4ccd5);border:1px solid #3c4a5a;border-bottom:none;border-radius:2px 2px 0 0"></div>
<div class="a" style="left:385.5px;top:691px;width:99px;height:7px;background:linear-gradient(#cfd6de,#e2e7ec 40%,#c4ccd5);border:1px solid #3c4a5a;border-bottom:none;border-radius:2px 2px 0 0"></div>
<div class="a" style="left:487.5px;top:691px;width:99px;height:7px;background:linear-gradient(#cfd6de,#e2e7ec 40%,#c4ccd5);border:1px solid #3c4a5a;border-bottom:none;border-radius:2px 2px 0 0"></div>
<div class="a" style="left:589.5px;top:691px;width:99px;height:7px;background:linear-gradient(#cfd6de,#e2e7ec 40%,#c4ccd5);border:1px solid #3c4a5a;border-bottom:none;border-radius:2px 2px 0 0"></div>
<div class="a" style="left:691.2px;top:691px;width:99px;height:7px;background:linear-gradient(#cfd6de,#e2e7ec 40%,#c4ccd5);border:1px solid #3c4a5a;border-bottom:none;border-radius:2px 2px 0 0"></div>
<div class="a" style="left:793.7px;top:691px;width:99px;height:7px;background:linear-gradient(#dce3ea,#eef2f6 40%,#d4dbe3);border:1px solid #3c4a5a;border-bottom:none;border-radius:2px 2px 0 0"></div>
<svg class="a" style="left:190px;top:692px;" width="22" height="6" viewBox="0 0 22 6"><ellipse cx="13" cy="9.5" rx="8" ry="7.5" fill="#d7262e"/></svg>
<svg class="a" style="left:291px;top:692px;" width="22" height="6" viewBox="0 0 22 6"><rect x="3" y="3.5" width="16" height="3" fill="#d9cf9a"/></svg>
<svg class="a" style="left:392px;top:692px;" width="22" height="6" viewBox="0 0 22 6"><path d="M2 6L20 1V6Z" fill="#e0513a"/></svg>
<svg class="a" style="left:495px;top:692px;" width="22" height="6" viewBox="0 0 22 6"><path d="M2 6L19 1V6Z" fill="#3b5fae"/></svg>
<svg class="a" style="left:597px;top:692px;" width="22" height="6" viewBox="0 0 22 6"><ellipse cx="13" cy="10" rx="8" ry="7.5" fill="#111"/></svg>
<svg class="a" style="left:700px;top:692px;" width="22" height="6" viewBox="0 0 22 6"><rect x="1" y="2.5" width="20" height="2" fill="#6b6f74"/></svg>
<svg class="a" style="left:800px;top:692px;" width="22" height="6" viewBox="0 0 22 6"><path d="M2 6V1H8L10 6Z" fill="#d8335c"/><path d="M10 6L14 1L18 6Z" fill="#3b5fae"/></svg>
<svg class="a" style="left:955px;top:693px;" width="8" height="5" viewBox="0 0 8 5"><circle cx="4" cy="5" r="3.5" fill="#d23a3a"/></svg>
<div class="a" style="left:1245.5px;top:690.8px;width:13.5px;height:7.2px;background:linear-gradient(#a9b7c6,#8d9db0);border-left:1px solid #55677b"></div>
<div class="a" style="left:333px;top:84px;width:1px;height:393px;background:#a9a9a9;z-index:3"></div>
<svg class="a" style="left:749px;top:325.5px;" width="51" height="3" viewBox="0 0 51 3"><path d="M0 1.8L1.25 0.4L2.50 1.8L3.75 0.4L5.00 1.8L6.25 0.4L7.50 1.8L8.75 0.4L10.00 1.8L11.25 0.4L12.50 1.8L13.75 0.4L15.00 1.8L16.25 0.4L17.50 1.8L18.75 0.4L20.00 1.8L21.25 0.4L22.50 1.8L23.75 0.4L25.00 1.8L26.25 0.4L27.50 1.8L28.75 0.4L30.00 1.8L31.25 0.4L32.50 1.8L33.75 0.4L35.00 1.8L36.25 0.4L37.50 1.8L38.75 0.4L40.00 1.8L41.25 0.4L42.50 1.8L43.75 0.4L45.00 1.8L46.25 0.4L47.50 1.8L48.75 0.4L50.00 1.8" fill="none" stroke="#9ac49a" stroke-width="0.8"/></svg>
</body></html>
